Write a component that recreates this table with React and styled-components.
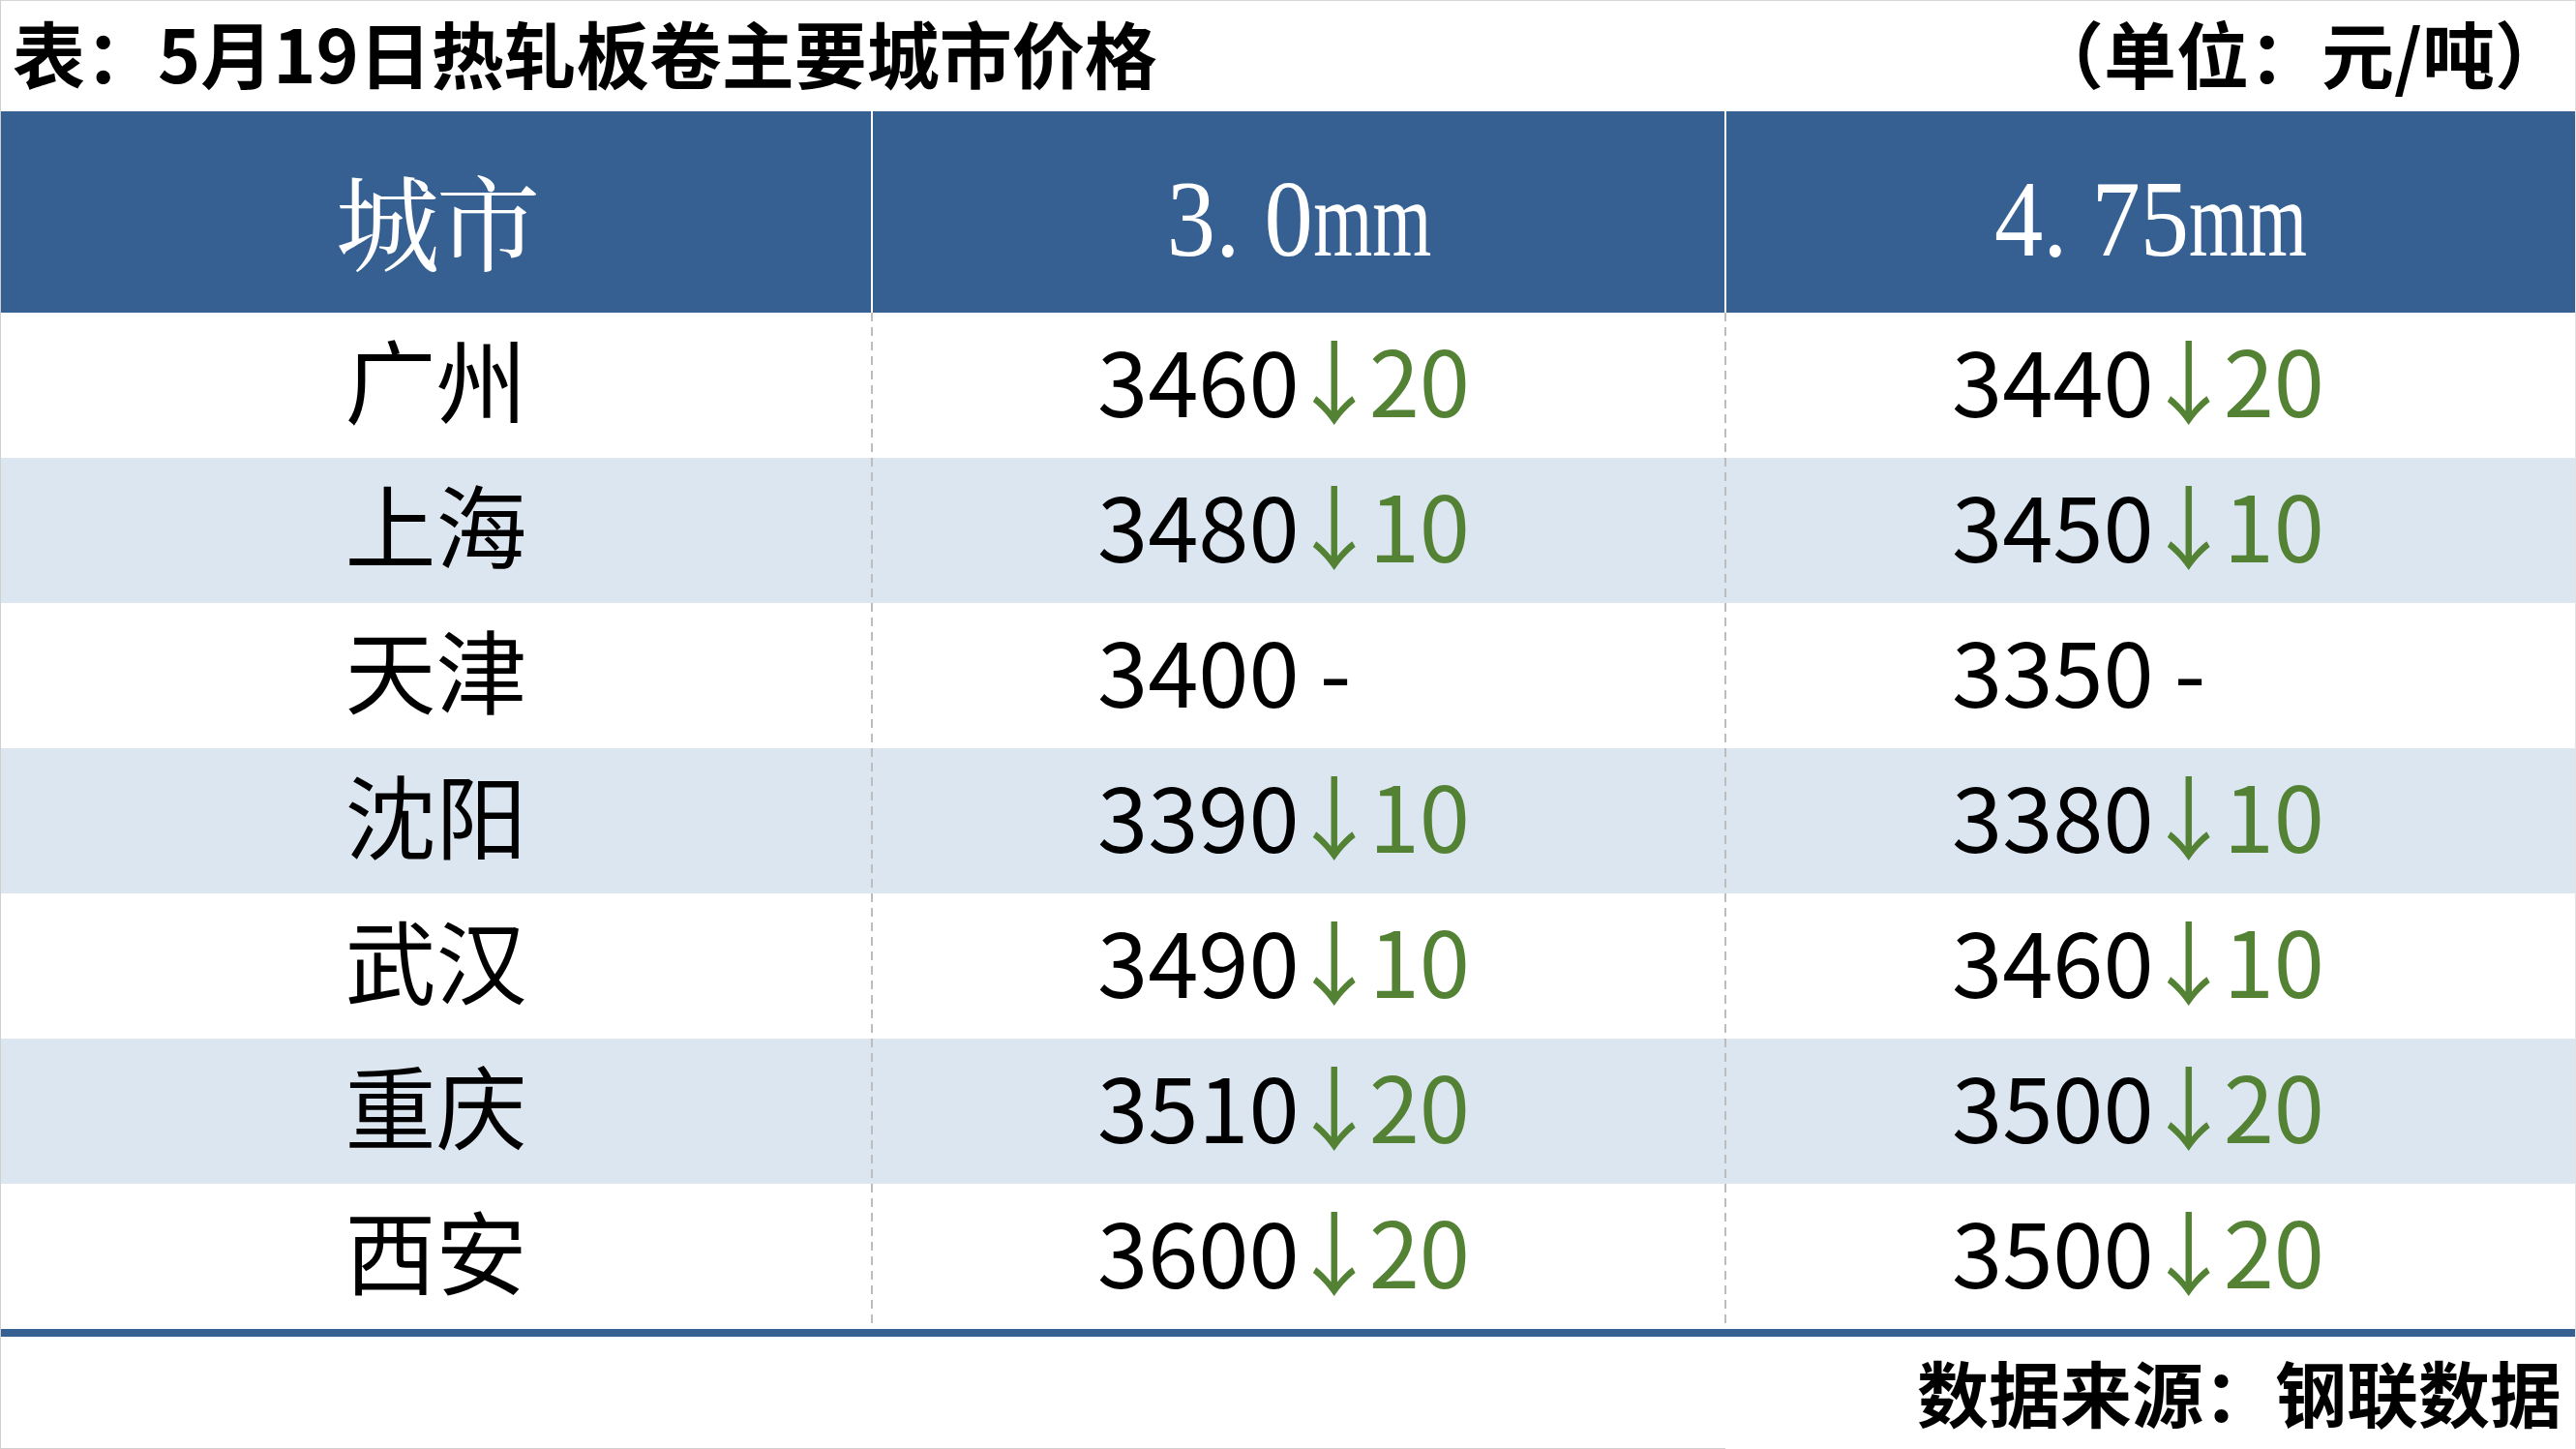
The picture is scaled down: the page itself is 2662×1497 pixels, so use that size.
import React from 'react';
import styled, { createGlobalStyle } from 'styled-components';

const GlobalStyle = createGlobalStyle`
  html, body {
    margin: 0;
    padding: 0;
    background: #fff;
  }
  body {
    font-family: "Noto Sans CJK SC", "Noto Sans", sans-serif;
  }
`;

const BLUE = '#376092';
const STRIPE = '#dce6f1';
const GREEN = '#548235';

const Sheet = styled.div`
  width: 2662px;
  height: 1497px;
  box-sizing: border-box;
  border-left: 1px solid #cfcfcf;
  border-right: 1px solid #e2e2e2;
  border-top: 1px solid #d6d6d6;
  display: flex;
  flex-direction: column;
  background: #fff;
  overflow: hidden;
`;

const TitleBar = styled.div`
  height: 114px;
  flex: none;
  box-sizing: border-box;
  display: flex;
  align-items: center;
  justify-content: space-between;
  padding: 0 8px 10px 12px;
  font-size: 75px;
  font-weight: 700;
  line-height: 1.4;
  color: #000;
`;

const Row = styled.div`
  display: grid;
  grid-template-columns: 899px 882px 879px;
  height: ${p => p.h}px;
  flex: none;
  background: ${p => p.bg};
`;

const HeadCell = styled.div`
  box-sizing: border-box;
  display: flex;
  align-items: center;
  justify-content: center;
  padding-top: 13px;
  color: #fff;
  border-left: ${p => (p.divider ? '2px solid #fff' : 'none')};
`;

const CityHead = styled.span`
  font-family: "Noto Serif CJK SC", "Noto Serif CJK", "Liberation Serif", "Noto Sans CJK SC", serif;
  font-size: 108px;
  line-height: 1.2;
  letter-spacing: -4px;
`;

const SizeHead = styled.span`
  display: inline-block;
  font-family: "Liberation Serif", serif;
  font-size: 113px;
  line-height: 1.2;
  transform: scaleX(0.89);
  transform-origin: center;
`;

const Unit = styled.span`
  display: inline-block;
  transform: scaleX(0.78);
  transform-origin: left center;
  margin-right: -39px;
`;

const dash = `repeating-linear-gradient(to bottom, #bdbdbd 0 9px, transparent 9px 15px)`;

const Cell = styled.div`
  box-sizing: border-box;
  display: flex;
  align-items: center;
  justify-content: ${p => (p.center ? 'center' : 'flex-start')};
  padding-left: ${p => p.pad || 0}px;
  padding-bottom: 16px;
  font-size: 94px;
  line-height: 1.2;
  color: #000;
  white-space: pre;
  background-image: ${p => (p.divider ? dash : 'none')};
  background-size: 2px 100%;
  background-repeat: no-repeat;
  background-position: left top;
`;

// trims the advance after a glyph so the full-width arrow sits tight
const Tight = styled.span`
  letter-spacing: -11px;
`;

const Delta = styled.span`
  color: ${GREEN};
`;

const Rule = styled.div`
  height: 8px;
  flex: none;
  background: ${BLUE};
`;

const Footer = styled.div`
  flex: 1;
  display: flex;
  align-items: center;
  justify-content: flex-end;
  padding-right: 14px;
  padding-bottom: 4px;
  font-size: 74px;
  font-weight: 700;
  line-height: 1.4;
  color: #000;
  background: linear-gradient(#d0d0d0, #d0d0d0) left bottom / 1782px 1px no-repeat;
`;

const rows = [
  ['广州', '3460', '20', '3440', '20'],
  ['上海', '3480', '10', '3450', '10'],
  ['天津', '3400', null, '3350', null],
  ['沈阳', '3390', '10', '3380', '10'],
  ['武汉', '3490', '10', '3460', '10'],
  ['重庆', '3510', '20', '3500', '20'],
  ['西安', '3600', '20', '3500', '20'],
];

function Price({ value, change }) {
  if (!change) return <>{value} -</>;
  return (
    <>
      {value.slice(0, -1)}
      <Tight>{value.slice(-1)}</Tight>
      <Delta>
        <Tight>↓</Tight>
        {change}
      </Delta>
    </>
  );
}

export default function App() {
  return (
    <>
      <GlobalStyle />
      <Sheet>
        <TitleBar>
          <span>表：5月19日热轧板卷主要城市价格</span>
          <span>（单位：元/吨）</span>
        </TitleBar>

        <Row h={208} bg={BLUE}>
          <HeadCell>
            <CityHead>城市</CityHead>
          </HeadCell>
          <HeadCell divider>
            <SizeHead>3. 0<Unit>mm</Unit></SizeHead>
          </HeadCell>
          <HeadCell divider>
            <SizeHead>4. 75<Unit>mm</Unit></SizeHead>
          </HeadCell>
        </Row>

        {rows.map((r, i) => (
          <Row key={r[0]} h={150} bg={i % 2 ? STRIPE : '#fff'}>
            <Cell center>{r[0]}</Cell>
            <Cell divider pad={234}>
              <Price value={r[1]} change={r[2]} />
            </Cell>
            <Cell divider pad={235}>
              <Price value={r[3]} change={r[4]} />
            </Cell>
          </Row>
        ))}

        <Rule />
        <Footer>数据来源：钢联数据</Footer>
      </Sheet>
    </>
  );
}
